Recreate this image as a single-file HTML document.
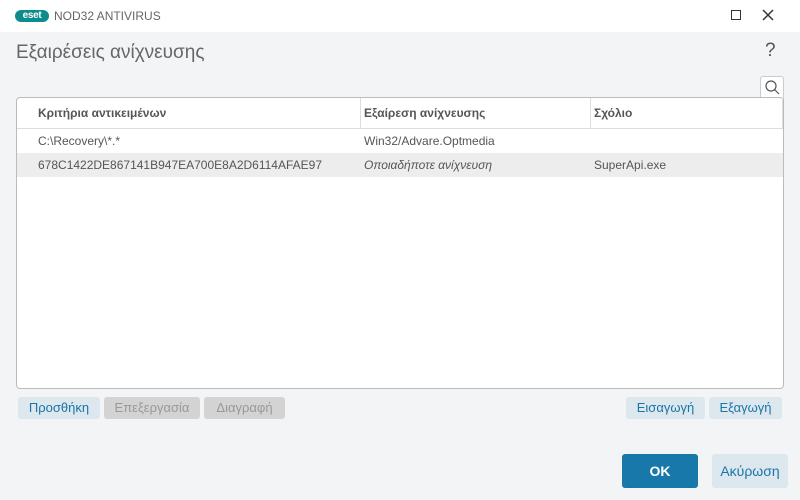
<!DOCTYPE html>
<html><head><meta charset="utf-8"><style>
*{margin:0;padding:0;box-sizing:border-box}
body{width:800px;height:500px;background:#f3f4f6;font-family:"Liberation Sans","DejaVu Sans",sans-serif;position:relative;overflow:hidden;color:#555}
.abs{position:absolute}
.tb{left:0;top:0;width:800px;height:32px;background:#fff}
.logo{left:15px;top:10px;width:34px;height:12px;background:#0e8c8c;border-radius:6px;color:#fff;font-size:10px;font-weight:bold;line-height:12px;text-align:center;letter-spacing:-0.3px}
.btn{position:absolute;height:22px;border-radius:3px;font-size:13px;line-height:22px;text-align:center}
.b1{background:#dde7ee;color:#1a75a8}
.b2{background:#d3d3d3;color:#999}
.cell{position:absolute;font-size:12px;line-height:24px;white-space:nowrap}
</style></head><body>
<div class="abs tb"></div>
<div class="abs logo">eset</div>
<div class="abs" style="left:54px;top:9px;font-size:12px;color:#666">NOD32 ANTIVIRUS</div>
<div class="abs" style="left:731px;top:10px;width:10px;height:10px;border:1.5px solid #333"></div>
<svg class="abs" style="left:762px;top:9px" width="12" height="12"><path d="M1 1L11 11M11 1L1 11" stroke="#333" stroke-width="1.5"/></svg>
<div class="abs" style="left:16px;top:42px;font-size:19px;color:#666">Εξαιρέσεις ανίχνευσης</div>
<div class="abs" style="left:765px;top:40px;font-size:19px;color:#555">?</div>
<div class="abs" style="left:760px;top:76px;width:24px;height:24px;background:#fff;border:1px solid #ccc;border-bottom:none;border-radius:3px 3px 0 0"></div>
<svg class="abs" style="left:764px;top:79px" width="16" height="16"><circle cx="7" cy="7" r="5" fill="none" stroke="#555" stroke-width="1.2"/><path d="M10.5 10.5L15 15" stroke="#555" stroke-width="1.2"/></svg>
<div class="abs" style="left:16px;top:97px;width:768px;height:292px;background:#fff;border:1px solid #bbb;border-radius:4px"></div>
<div class="abs" style="left:17px;top:128px;width:766px;height:1px;background:#ddd"></div>
<div class="abs" style="left:360px;top:98px;width:1px;height:30px;background:#ddd"></div>
<div class="abs" style="left:590px;top:98px;width:1px;height:30px;background:#ddd"></div>
<div class="abs" style="left:782px;top:98px;width:1px;height:30px;background:#ddd"></div>
<div class="abs" style="left:17px;top:153px;width:766px;height:24px;background:#ededed"></div>
<div class="cell" style="left:38px;top:101px;font-weight:bold;color:#555">Κριτήρια αντικειμένων</div>
<div class="cell" style="left:364px;top:101px;font-weight:bold;color:#555">Εξαίρεση ανίχνευσης</div>
<div class="cell" style="left:594px;top:101px;font-weight:bold;color:#555">Σχόλιο</div>
<div class="cell" style="left:38px;top:129px">C:\Recovery\*.*</div>
<div class="cell" style="left:364px;top:129px">Win32/Advare.Optmedia</div>
<div class="cell" style="left:38px;top:153px">678C1422DE867141B947EA700E8A2D6114AFAE97</div>
<div class="cell" style="left:364px;top:153px;font-style:italic">Οποιαδήποτε ανίχνευση</div>
<div class="cell" style="left:594px;top:153px">SuperApi.exe</div>
<div class="btn b1" style="left:18px;top:397px;width:82px">Προσθήκη</div>
<div class="btn b2" style="left:104px;top:397px;width:96px">Επεξεργασία</div>
<div class="btn b2" style="left:204px;top:397px;width:81px">Διαγραφή</div>
<div class="btn b1" style="left:626px;top:397px;width:79px">Εισαγωγή</div>
<div class="btn b1" style="left:709px;top:397px;width:73px">Εξαγωγή</div>
<div class="btn" style="left:622px;top:454px;width:76px;height:34px;line-height:34px;background:#1878aa;color:#fff;font-weight:bold;font-size:14px">OK</div>
<div class="btn b1" style="left:712px;top:454px;width:76px;height:34px;line-height:34px;font-size:14px">Ακύρωση</div>
</body></html>
